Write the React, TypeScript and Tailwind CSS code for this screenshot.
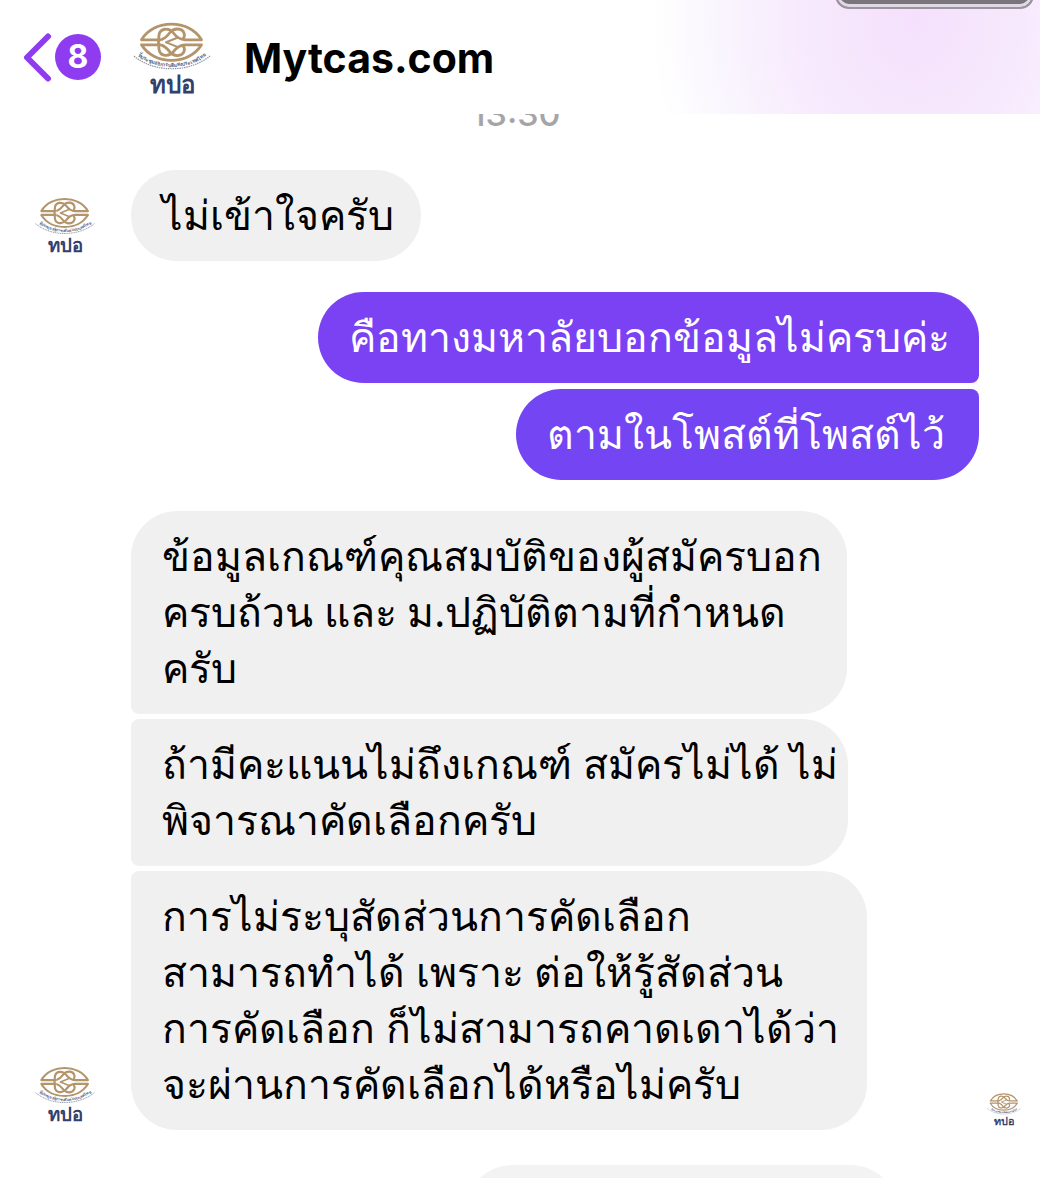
import { useId } from "react";
import type { ReactNode } from "react";

function CouncilLogo({ className }: { className: string }) {
  const arc = useId();
  return (
    <svg viewBox="0 0 80 86" className={className} role="img" aria-label="ทปอ">
      <g fill="none" stroke="#b3946b" strokeWidth="2.8" strokeLinejoin="round">
        <path d="M29 21.800H9.500C22 1 57 1 69.500 21.800H53C47 21.800 44 18.500 41 14.500C37 9.500 28 10 27 17C26.300 22 26.300 26.600 27 31.500C28 38.500 37 39 41 34.100C44 30.100 47 26.800 53 26.800H69.500C57 47.600 22 47.600 9.500 26.800H29" />
        <path d="M29 21.800C33 20.500 35 18.500 38 14.500C42 9.500 50 10 52 15C53 17.500 52.500 19 51 21" />
        <path d="M29 26.800C33 28.100 35 30.100 38 34.100C42 39.100 50 38.600 52 33.600C53 31.100 52.500 29.600 51 27.600" />
        <path d="M46 19.500L34 24.300L46 29.100" strokeWidth="2" />
      </g>
      <path id={arc} d="M4 36C22 53 57 53 76 36" fill="none" />
      <text className="fill-[#56627f] font-['Noto_Sans',sans-serif] text-[5px] font-bold">
        <textPath href={`#${arc}`} startOffset="50%" textAnchor="middle">
          ที่ประชุมอธิการบดีแห่งประเทศไทย
        </textPath>
      </text>
      <path d="M2 38C22 55 57 55 78 38" fill="none" stroke="#8c94a8" strokeWidth="1.200" strokeDasharray="1.500 0.800" />
      <text
        x="40"
        y="75"
        textAnchor="middle"
        className="fill-[#33406b] font-['Noto_Sans',sans-serif] text-[24px] font-bold"
      >
        ทปอ
      </text>
    </svg>
  );
}

function Bubble({ lines, className }: { lines: string[]; className: string }) {
  return (
    <p className={`max-w-full px-[31px] pt-4 pb-[19px] text-[41px] leading-[56px] whitespace-nowrap ${className}`}>
      {lines.map((line) => (
        <span key={line} className="block">
          {line}
        </span>
      ))}
    </p>
  );
}

function Incoming({ children, seen }: { children: ReactNode; seen?: boolean }) {
  return (
    <section className="flex items-end">
      <div className="w-[131px] shrink-0 pl-[34px]">
        <CouncilLogo className="h-[67px] w-[62px]" />
      </div>
      <div className="flex min-w-0 grow flex-col items-start gap-[5px]">{children}</div>
      {seen && <CouncilLogo className="mr-[18px] h-[39px] w-9 shrink-0" />}
    </section>
  );
}

const received = "bg-[#f0f0f0] text-black";
const sent = "text-white";

export default function App() {
  return (
    <div className="h-screen overflow-hidden bg-white font-['Noto_Sans',sans-serif]">
      <header className="relative z-10 flex h-[114px] items-center bg-white bg-[radial-gradient(ellipse_230px_260px_at_88%_20%,#f4e0fc_0%,#f7eafd_50%,#faf7fe_90%,#ffffff_115%)] pl-5">
        <button type="button" aria-label="กลับ" className="flex items-center gap-[3px]">
          <svg viewBox="0 0 32 52" className="h-[52px] w-8" fill="none" stroke="#8f3cf0" strokeWidth="6" strokeLinecap="round" strokeLinejoin="round">
            <path d="M28 5.500L7 26.500L28 47.500" />
          </svg>
          <span className="flex size-[46px] items-center justify-center rounded-full bg-[#8f3cf0] font-['Inter',sans-serif] text-[32px] font-bold text-white">
            8
          </span>
        </button>
        <CouncilLogo className="mt-2 ml-[31px] h-[86px] w-20" />
        <h1 className="ml-8 pt-1 font-['Inter',sans-serif] text-[41px] font-bold text-black">Mytcas.com</h1>
        <div className="absolute -top-8 right-[6px] h-[41px] w-[199px] rounded-[14px] border-2 border-[#9a949e] bg-[#7a757d] ring-3 ring-[#e2d9e7] ring-inset" />
      </header>
      <main>
        <time className="-mt-[14px] block pr-2 text-center font-['Inter',sans-serif] text-[34px] leading-7 font-medium text-[#a5a5a8]">13:30</time>
        <div className="mt-[42px] flex flex-col gap-[31px]">
          <Incoming>
            <Bubble lines={["ไม่เข้าใจครับ"]} className={`w-[290px] rounded-[46px] ${received}`} />
          </Incoming>
          <section className="flex flex-col items-end gap-[6px] pr-[61px]">
            <Bubble lines={["คือทางมหาลัยบอกข้อมูลไม่ครบค่ะ"]} className={`w-[661px] rounded-[46px] rounded-br-lg bg-[#7a42f3] ${sent}`} />
            <Bubble lines={["ตามในโพสต์ที่โพสต์ไว้"]} className={`w-[463px] rounded-[46px] rounded-tr-lg bg-[#7345f3] ${sent}`} />
          </section>
          <Incoming seen>
            <Bubble
              lines={["ข้อมูลเกณฑ์คุณสมบัติของผู้สมัครบอก", "ครบถ้วน และ ม.ปฏิบัติตามที่กำหนด", "ครับ"]}
              className={`w-[716px] rounded-[46px] rounded-bl-lg ${received}`}
            />
            <Bubble
              lines={["ถ้ามีคะแนนไม่ถึงเกณฑ์ สมัครไม่ได้ ไม่", "พิจารณาคัดเลือกครับ"]}
              className={`w-[717px] rounded-r-[46px] rounded-l-lg ${received}`}
            />
            <Bubble
              lines={["การไม่ระบุสัดส่วนการคัดเลือก", "สามารถทำได้ เพราะ ต่อให้รู้สัดส่วน", "การคัดเลือก ก็ไม่สามารถคาดเดาได้ว่า", "จะผ่านการคัดเลือกได้หรือไม่ครับ"]}
              className={`w-[736px] rounded-[46px] rounded-tl-lg ${received}`}
            />
          </Incoming>
          <div className="mt-1 mr-[143px] h-24 w-[431px] self-end rounded-[46px] bg-[#f3f3f3]" />
        </div>
      </main>
    </div>
  );
}
